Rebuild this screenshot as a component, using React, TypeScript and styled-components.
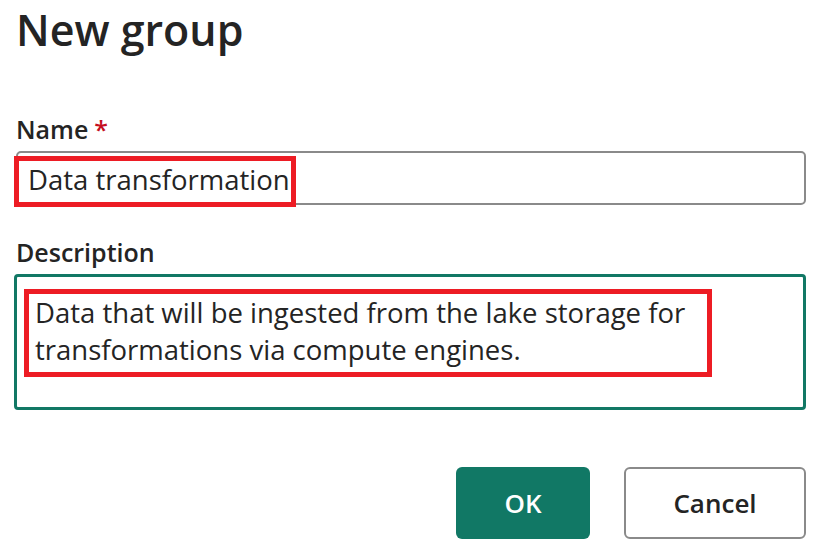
import styled, { createGlobalStyle } from "styled-components";

const GlobalStyle = createGlobalStyle`
  html, body {
    margin: 0;
    padding: 0;
    background: #ffffff;
  }
  body {
    font-family: "Open Sans", "Noto Sans", sans-serif;
    color: #242424;
  }
`;

const Dialog = styled.div`
  width: 816px;
  height: 555px;
  box-sizing: border-box;
  padding: 0 10px 0 16px;
  display: flex;
  flex-direction: column;
`;

const Title = styled.h1`
  margin: 0;
  font-size: 43px;
  line-height: 60px;
  font-weight: 600;
  color: #242424;
`;

const Field = styled.div<{ $top: number }>`
  display: flex;
  flex-direction: column;
  gap: 6px;
  margin-top: ${(p) => p.$top}px;
`;

const Label = styled.label`
  font-size: 25px;
  line-height: 32px;
  font-weight: 600;
  color: #242424;
`;

const Required = styled.span`
  color: #c50f1f;
  margin-left: 6px;
`;

const InputBox = styled.div`
  height: 54px;
  box-sizing: border-box;
  border: 2px solid #8a8a8a;
  border-radius: 5px;
  display: flex;
  align-items: flex-start;
`;

const TextAreaBox = styled.div`
  height: 136px;
  box-sizing: border-box;
  border: 3px solid #117865;
  border-radius: 4px;
  display: flex;
  align-items: flex-start;
  margin-left: -2px;
`;

const Highlight = styled.span<{ $w: number; $h: number; $ml: number; $mt: number }>`
  display: block;
  box-sizing: border-box;
  width: ${(p) => p.$w}px;
  height: ${(p) => p.$h}px;
  margin-left: ${(p) => p.$ml}px;
  margin-top: ${(p) => p.$mt}px;
  flex-shrink: 0;
  border: 5px solid #ed1c24;
`;

const Value = styled.span<{ $pl: number; $pt?: number }>`
  display: block;
  font-size: 27.5px;
  line-height: 37px;
  padding-left: ${(p) => p.$pl}px;
  padding-top: ${(p) => p.$pt ?? 0}px;
  color: #242424;
  white-space: nowrap;
`;

const Footer = styled.div`
  margin-top: 57px;
  display: flex;
  justify-content: flex-end;
  gap: 34px;
`;

const Button = styled.button<{ $primary?: boolean; $w: number }>`
  width: ${(p) => p.$w}px;
  height: 72px;
  box-sizing: border-box;
  border-radius: 6px;
  font-family: "Open Sans", "Noto Sans", sans-serif;
  font-size: 26px;
  font-weight: 600;
  cursor: pointer;
  background: ${(p) => (p.$primary ? "#117865" : "#ffffff")};
  color: ${(p) => (p.$primary ? "#ffffff" : "#242424")};
  border: ${(p) => (p.$primary ? "none" : "2px solid #8a8a8a")};
`;

export default function App() {
  return (
    <>
      <GlobalStyle />
      <Dialog>
        <Title>New group</Title>
        <Field $top={53}>
          <Label>
            Name<Required>*</Required>
          </Label>
          <InputBox>
            <Highlight $w={282} $h={51} $ml={-4} $mt={3}>
              <Value $pl={9}>Data transformation</Value>
            </Highlight>
          </InputBox>
        </Field>
        <Field $top={31}>
          <Label>Description</Label>
          <TextAreaBox>
            <Highlight $w={688} $h={88} $ml={7} $mt={12}>
              <Value $pl={6}>
                Data that will be ingested from the lake storage for
                <br />
                transformations via compute engines.
              </Value>
            </Highlight>
          </TextAreaBox>
        </Field>
        <Footer>
          <Button $primary $w={134}>
            OK
          </Button>
          <Button $w={182}>Cancel</Button>
        </Footer>
      </Dialog>
    </>
  );
}
